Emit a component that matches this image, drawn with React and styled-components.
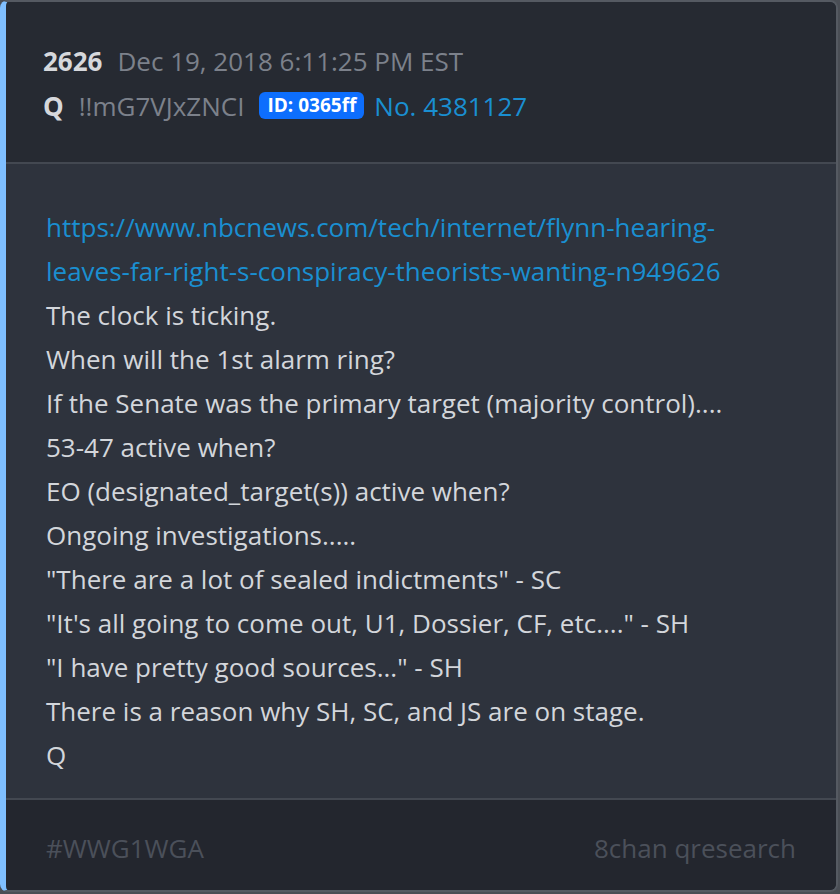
import React from 'react';
import styled, {createGlobalStyle} from 'styled-components';

const GlobalStyle = createGlobalStyle`
    html, body {
        margin: 0;
        padding: 0;
        background: #4a4e55;
    }
    body {
        font-family: 'Open Sans', 'Noto Sans', sans-serif;
    }
`;

const Card = styled.article`
    width: 838px;
    height: 892px;
    box-sizing: border-box;
    display: flex;
    flex-direction: column;
    border: 2px solid #555a62;
    border-left: 6px solid #7fbfff;
    border-radius: 8px;
    overflow: hidden;
    background: #2e333d;
`;

const Header = styled.header`
    background: #262a32;
    padding: 36px 30px 34px 37px;
    border-bottom: 2px solid #434851;
`;

const MetaRow = styled.div`
    display: flex;
    align-items: center;
    gap: 15px;
    height: 45px;
    font-size: 26px;
`;

const Strong = styled.span`
    font-weight: 700;
    color: #d6d8dc;
`;

const Muted = styled.span`
    color: #7c818b;
`;

const IdBadge = styled.span`
    background: #0d6efd;
    color: #fff;
    font-weight: 700;
    font-size: 19px;
    border-radius: 6px;
    padding: 2px 8px;
    line-height: 23px;
    margin-right: -5px;
`;

const PostLink = styled.a`
    color: #1a8fd1;
    text-decoration: none;
`;

const Body = styled.section`
    flex: 1;
    padding: 41px 30px 0 40px;
    font-size: 26px;
    line-height: 44px;
    color: #d3d6db;
`;

const Line = styled.div`
    white-space: nowrap;
`;

const Footer = styled.footer`
    background: #23262e;
    border-top: 2px solid #434851;
    height: 92px;
    box-sizing: border-box;
    display: flex;
    align-items: center;
    justify-content: space-between;
    padding: 5px 40px 0 40px;
    font-size: 26px;
    color: #4b505a;
`;

const lines = [
    'The clock is ticking.',
    'When will the 1st alarm ring?',
    'If the Senate was the primary target (majority control)....',
    '53-47 active when?',
    'EO (designated_target(s)) active when?',
    'Ongoing investigations.....',
    '"There are a lot of sealed indictments" - SC',
    '"It\'s all going to come out, U1, Dossier, CF, etc...." - SH',
    '"I have pretty good sources..." - SH',
    'There is a reason why SH, SC, and JS are on stage.',
    'Q'
];

export default function App() {
    return (
        <>
            <GlobalStyle />
            <Card>
                <Header>
                    <MetaRow>
                        <Strong>2626</Strong>
                        <Muted>Dec 19, 2018 6:11:25 PM EST</Muted>
                    </MetaRow>
                    <MetaRow>
                        <Strong>Q</Strong>
                        <Muted>!!mG7VJxZNCI</Muted>
                        <IdBadge>ID: 0365ff</IdBadge>
                        <PostLink href="#">No. 4381127</PostLink>
                    </MetaRow>
                </Header>
                <Body>
                    <Line>
                        <PostLink href="#">https://www.nbcnews.com/tech/internet/flynn-hearing-</PostLink>
                    </Line>
                    <Line>
                        <PostLink href="#">leaves-far-right-s-conspiracy-theorists-wanting-n949626</PostLink>
                    </Line>
                    {lines.map((text, i) => (
                        <Line key={i}>{text}</Line>
                    ))}
                </Body>
                <Footer>
                    <span>#WWG1WGA</span>
                    <span>8chan qresearch</span>
                </Footer>
            </Card>
        </>
    );
}
